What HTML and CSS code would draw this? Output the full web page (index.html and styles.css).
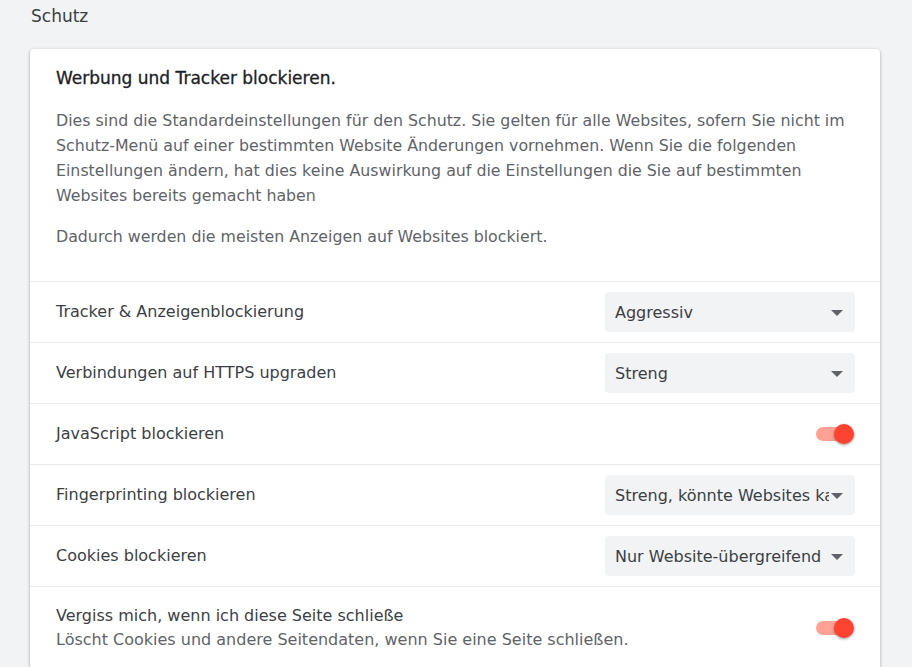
FILE: index.html
```html
<!DOCTYPE html>
<html lang="de">
<head>
    <meta charset="UTF-8">
    <meta name="viewport" content="width=device-width, initial-scale=1.0">
    <title>Schutz</title>
    <link rel="stylesheet" href="styles.css">
</head>
<body>
    <h2 class="page-title">Schutz</h2>

    <div class="card">
        <div class="intro">
            <h3>Werbung und Tracker blockieren.</h3>
            <p>Dies sind die Standardeinstellungen für den Schutz. Sie gelten für alle Websites, sofern Sie nicht im Schutz-Menü auf einer bestimmten Website Änderungen vornehmen. Wenn Sie die folgenden Einstellungen ändern, hat dies keine Auswirkung auf die Einstellungen die Sie auf bestimmten Websites bereits gemacht haben</p>
            <p>Dadurch werden die meisten Anzeigen auf Websites blockiert.</p>
        </div>

        <div class="row">
            <span class="label">Tracker &amp; Anzeigenblockierung</span>
            <div class="select"><span>Aggressiv</span></div>
        </div>
        <div class="row">
            <span class="label">Verbindungen auf HTTPS upgraden</span>
            <div class="select"><span>Streng</span></div>
        </div>
        <div class="row">
            <span class="label">JavaScript blockieren</span>
            <div class="toggle on"><div class="knob"></div></div>
        </div>
        <div class="row">
            <span class="label">Fingerprinting blockieren</span>
            <div class="select"><span>Streng, könnte Websites kaputt machen</span></div>
        </div>
        <div class="row">
            <span class="label">Cookies blockieren</span>
            <div class="select"><span>Nur Website-übergreifend</span></div>
        </div>
        <div class="row tall">
            <div class="label">
                <div>Vergiss mich, wenn ich diese Seite schließe</div>
                <div class="sub">Löscht Cookies und andere Seitendaten, wenn Sie eine Seite schließen.</div>
            </div>
            <div class="toggle on"><div class="knob"></div></div>
        </div>
    </div>
</body>
</html>
```

FILE: styles.css
```css
body {
    margin: 0;
    padding: 0 32px 0 30px;
    background-color: #f1f3f4;
    font-family: "DejaVu Sans", sans-serif;
    color: #3c4043;
}
.page-title {
    margin: 0;
    padding: 5px 0 0 1px;
    height: 44px;
    font-size: 17px;
    font-weight: normal;
    line-height: 22px;
    color: #3c4043;
}
.card {
    background: white;
    border-radius: 4px;
    box-shadow: 0 1px 2px rgba(60, 64, 67, 0.3), 0 1px 3px 1px rgba(60, 64, 67, 0.15);
}
.intro {
    padding: 17px 26px 32px;
    border-bottom: 1px solid #e8eaed;
}
.intro h3 {
    margin: 0 0 18px;
    font-size: 17px;
    font-weight: normal;
    line-height: 24px;
    color: #202124;
    -webkit-text-stroke: 0.3px #202124;
}
.intro p {
    margin: 0 0 16px;
    font-size: 15.8px;
    line-height: 25px;
    color: #5f6368;
}
.intro p:last-child {
    margin-bottom: 0;
}
.row {
    display: flex;
    align-items: center;
    justify-content: space-between;
    height: 60px;
    padding: 0 25px 0 26px;
    border-bottom: 1px solid #e8eaed;
    font-size: 16px;
}
.row:last-child {
    border-bottom: none;
}
.row.tall {
    height: 82px;
}
.label {
    color: #3c4043;
    line-height: 24px;
}
.sub {
    color: #5f6368;
}
.select {
    position: relative;
    width: 250px;
    height: 40px;
    box-sizing: border-box;
    padding: 0 26px 0 10px;
    background-color: #f1f3f4;
    border-radius: 4px;
    display: flex;
    align-items: center;
    color: #3c4043;
    overflow: hidden;
    white-space: nowrap;
}
.select span {
    overflow: hidden;
}
.select::after {
    content: "";
    position: absolute;
    right: 12px;
    top: 18px;
    border-left: 6px solid transparent;
    border-right: 6px solid transparent;
    border-top: 6px solid #5f6368;
}
.toggle {
    position: relative;
    width: 34px;
    height: 14px;
    margin-right: 5px;
    border-radius: 7px;
    background-color: #ffa195;
}
.toggle .knob {
    position: absolute;
    top: -3px;
    right: -4px;
    width: 20px;
    height: 20px;
    border-radius: 50%;
    background-color: #ff4331;
    box-shadow: 0 1px 3px rgba(0, 0, 0, 0.4);
}
```
